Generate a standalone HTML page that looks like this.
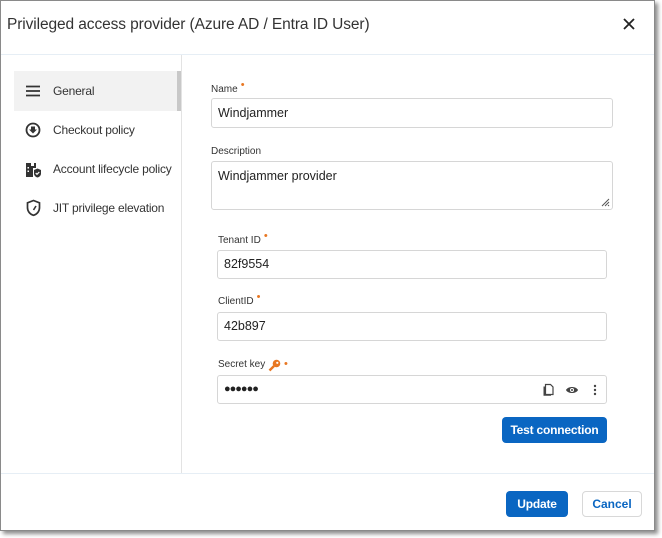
<!DOCTYPE html>
<html><head><style>
*{box-sizing:border-box;margin:0;padding:0}
body{width:662px;height:538px;background:#fff;font-family:"Liberation Sans",sans-serif;position:relative;overflow:hidden;color:#333}
.dlg{position:absolute;left:0;top:0;width:655px;height:531px;background:#fff;border:1px solid #8a8a8a;box-shadow:3px 3px 4px rgba(0,0,0,.45)}
.abs{position:absolute}
.title{left:6px;top:15px;font-size:15.5px;color:#333;letter-spacing:-0.1px}
.hr{background:#e6eef5;height:1px}
.side{font-size:12px;color:#333;letter-spacing:-0.2px}
.lbl{font-size:10px;color:#333}
.req{color:#e87722;font-size:11px;position:relative;top:-4px;margin-left:3px}
.inp{border:1px solid #d6d6d6;border-radius:3px;font-size:12.5px;color:#222;padding-left:6px}
.btn{background:#0a66c2;color:#fff;border-radius:4px;font-size:12px;font-weight:bold;text-align:center;letter-spacing:-0.2px}
</style></head><body>
<div class="dlg">
<div class="abs title">Privileged access provider (Azure AD / Entra ID User)</div>
<svg class="abs" style="left:622px;top:17px" width="12" height="12"><path d="M1 1L11 11M11 1L1 11" stroke="#222" stroke-width="1.8"/></svg>
<div class="abs hr" style="left:0;top:53px;width:653px"></div>
<div class="abs" style="left:180px;top:54px;width:1px;height:418px;background:#e3e3e3"></div>
<div class="abs hr" style="left:0;top:472px;width:653px"></div>
<div class="abs" style="left:13px;top:70px;width:163px;height:40px;background:#f2f2f2"></div>
<div class="abs" style="left:176px;top:70px;width:4px;height:40px;background:#c8c8c8"></div>
<svg class="abs" style="left:24px;top:84px" width="16" height="12"><path d="M1 1.5h14M1 6h14M1 10.5h14" stroke="#333" stroke-width="1.8"/></svg>
<div class="abs side" style="left:52px;top:83px">General</div>
<svg class="abs" style="left:24px;top:121px" width="16" height="16"><circle cx="8" cy="8" r="6.5" fill="none" stroke="#333" stroke-width="1.8"/><path d="M6 4.5h4v3h2l-4 4-4-4h2z" fill="#333"/></svg>
<div class="abs side" style="left:52px;top:122px">Checkout policy</div>
<svg class="abs" style="left:24px;top:160px" width="16" height="17"><path d="M1 2h5v3h3v-3h2v5h-3v9h-7z" fill="#333"/><rect x="2.5" y="6" width="1.5" height="1.5" fill="#fff"/><rect x="2.5" y="9.5" width="1.5" height="1.5" fill="#fff"/><path d="M9 9l3.5-1.5 3.5 1.5v3.5c0 2-1.5 3.5-3.5 4-2-.5-3.5-2-3.5-4z" fill="#333"/><path d="M10.7 12l1.3 1.3 2.3-2.3" stroke="#fff" stroke-width="1.2" fill="none"/></svg>
<div class="abs side" style="left:52px;top:161px">Account lifecycle policy</div>
<svg class="abs" style="left:25px;top:198px" width="15" height="18"><path d="M7.5 1.5l6 2.3v5c0 3.6-2.6 6.5-6 7.5-3.4-1-6-3.9-6-7.5v-5z" fill="none" stroke="#333" stroke-width="1.7"/><path d="M7.5 11l2.5-4" stroke="#333" stroke-width="1.6"/></svg>
<div class="abs side" style="left:52px;top:200px">JIT privilege elevation</div>

<div class="abs lbl" style="left:210px;top:82px">Name<span class="req">•</span></div>
<div class="abs inp" style="left:210px;top:97px;width:402px;height:30px;line-height:28px">Windjammer</div>
<div class="abs lbl" style="left:210px;top:145px">Description</div>
<div class="abs inp" style="left:210px;top:160px;width:402px;height:49px;padding-top:7px">Windjammer provider
<svg class="abs" style="right:2px;bottom:2px" width="9" height="9"><path d="M8 1L1 8M8 4L4 8M8 7L7 8" stroke="#555" stroke-width="1"/></svg></div>
<div class="abs lbl" style="left:217px;top:233px">Tenant ID<span class="req">•</span></div>
<div class="abs inp" style="left:216px;top:249px;width:390px;height:29px;line-height:27px">82f9554</div>
<div class="abs lbl" style="left:217px;top:294px">ClientID<span class="req">•</span></div>
<div class="abs inp" style="left:216px;top:311px;width:390px;height:29px;line-height:27px">42b897</div>
<div class="abs lbl" style="left:217px;top:358px">Secret key</div>
<svg class="abs" style="left:267px;top:358px" width="13" height="13"><circle cx="8.5" cy="4.5" r="3.8" fill="#e87722"/><circle cx="9.3" cy="3.8" r="1.1" fill="#fff"/><path d="M6 7L1.5 11.5" stroke="#e87722" stroke-width="2.4"/></svg>
<div class="abs req" style="left:283px;top:357px;margin:0">•</div>
<div class="abs inp" style="left:216px;top:374px;width:390px;height:29px;line-height:27px;font-size:11px;letter-spacing:-1px">●●●●●●</div>
<svg class="abs" style="left:541px;top:382px" width="12" height="13"><path d="M3.5 3.5v-2h5l2.5 2.5v7.5h-7.5z" fill="none" stroke="#444" stroke-width="1.2"/><path d="M1.5 3.5h2.5v8.5h5v0.8h-7.5z" fill="#444"/></svg>
<svg class="abs" style="left:564px;top:384px" width="14" height="10"><path d="M1 5c2-4 10-4 12 0-2 4-10 4-12 0z" fill="#444"/><circle cx="7" cy="5" r="2" fill="#fff"/><circle cx="7" cy="5" r="1" fill="#444"/></svg>
<svg class="abs" style="left:592px;top:383px" width="4" height="12"><circle cx="2" cy="2" r="1.2" fill="#444"/><circle cx="2" cy="6" r="1.2" fill="#444"/><circle cx="2" cy="10" r="1.2" fill="#444"/></svg>
<div class="abs btn" style="left:501px;top:416px;width:105px;height:26px;line-height:26px">Test connection</div>
<div class="abs btn" style="left:505px;top:490px;width:62px;height:26px;line-height:26px">Update</div>
<div class="abs" style="left:581px;top:490px;width:60px;height:26px;line-height:24px;border:1px solid #d8d8d8;border-radius:4px;color:#0a66c2;font-size:12px;font-weight:bold;text-align:center">Cancel</div>
</div>
</body></html>
